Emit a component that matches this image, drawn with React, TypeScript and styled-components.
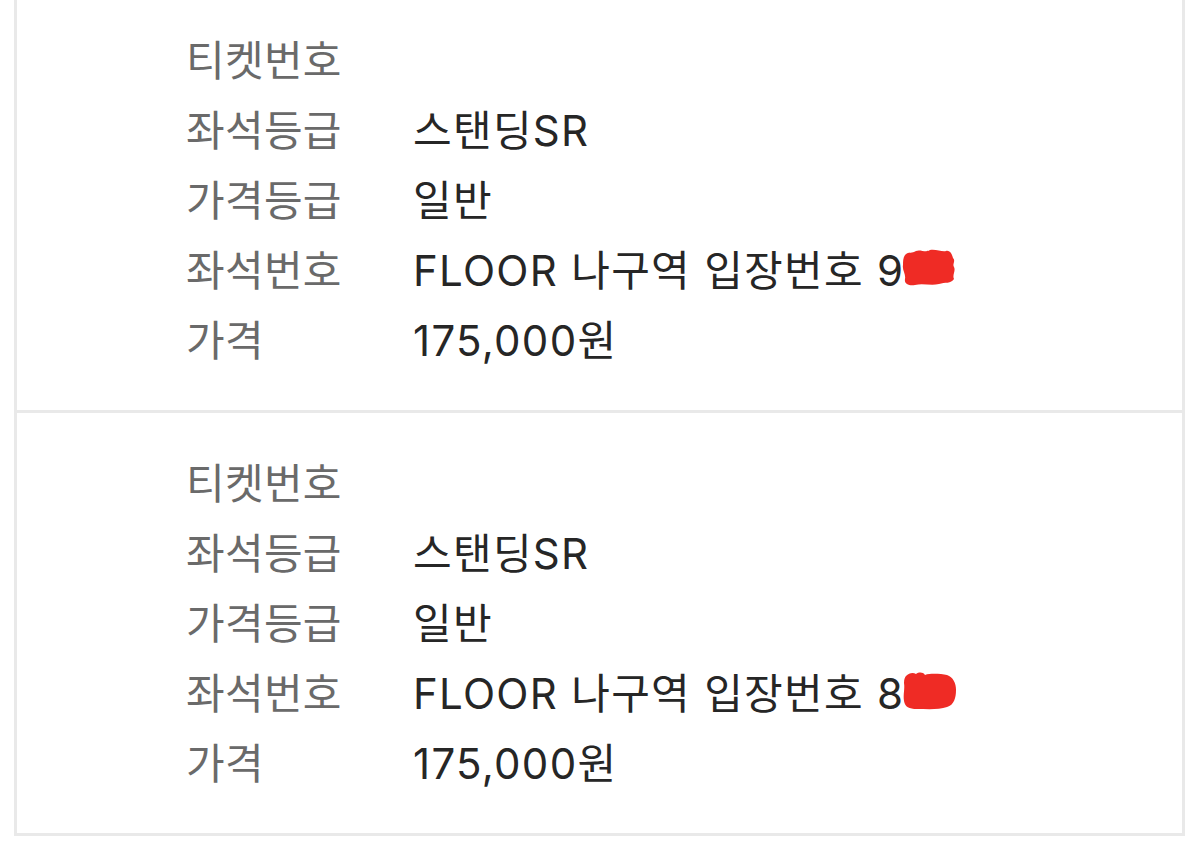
import styled, { createGlobalStyle } from "styled-components";

const GlobalStyle = createGlobalStyle`
    html, body {
        margin: 0;
        padding: 0;
        background: #ffffff;
    }
    body {
        font-family: "Inter", "Noto Sans CJK KR", sans-serif;
        overflow: hidden;
    }
`;

const Page = styled.div`
    width: 1200px;
    height: 847px;
    overflow: hidden;
    background: #ffffff;
`;

const TicketList = styled.div`
    margin: -13px 0 0 14px;
    width: 1171px;
    box-sizing: border-box;
    border: 3px solid #e9e9e9;
`;

const TicketCard = styled.div<{ $last?: boolean }>`
    display: flex;
    flex-direction: column;
    padding: 32px 0 38px 169px;
    border-bottom: ${(props) => (props.$last ? "none" : "3px solid #e9e9e9")};
`;

const Row = styled.div`
    display: grid;
    grid-template-columns: 227px 1fr;
    align-items: center;
    height: 70px;
    font-size: 42px;
`;

const Label = styled.span`
    color: #6a6a6a;
    letter-spacing: 0.3px;
`;

const Value = styled.span`
    color: #262626;
    display: flex;
    align-items: center;
    white-space: nowrap;
    letter-spacing: 1.3px;
`;

const Scribble = styled.svg`
    display: block;
    flex: 0 0 54px;
    width: 54px;
    height: 38px;
    margin-left: -2px;
    margin-top: 2px;
`;

const Blob = ({ variant }: { variant: number }) => (
    <Scribble viewBox="0 0 54 38" preserveAspectRatio="none">
        {variant === 0 ? (
            <path
                d="M3 6 C7 2 10 5 14 2 C18 0 24 4 28 1 C34 0 40 3 44 2 C48 1 50 5 51 9 C54 12 50 15 52 18 C54 22 50 26 52 30 C49 35 43 33 37 35 C29 37 21 34 13 36 C7 37 2 35 3 30 C4 25 0 21 1 16 C1 12 1 9 3 6 Z"
                fill="#ef2b25"
            />
        ) : (
            <path
                d="M4 4 C7 1 11 0 14 2 C17 0 21 0 23 3 C29 1 39 2 45 3 C51 5 54 11 54 18 C54 26 52 33 45 35 C37 38 25 37 15 37 C7 37 3 35 2 29 C1 22 3 17 2 11 C2 7 3 5 4 4 Z"
                fill="#ef2b25"
            />
        )}
    </Scribble>
);

interface Ticket {
    grade: string;
    price: string;
    seatPrefix: string;
    amount: string;
}

const tickets: Ticket[] = [
    { grade: "스탠딩SR", price: "일반", seatPrefix: "FLOOR 나구역 입장번호 9", amount: "175,000원" },
    { grade: "스탠딩SR", price: "일반", seatPrefix: "FLOOR 나구역 입장번호 8", amount: "175,000원" },
];

export default function App() {
    return (
        <Page>
            <GlobalStyle />
            <TicketList>
                {tickets.map((t, i) => (
                    <TicketCard key={i} $last={i === tickets.length - 1}>
                        <Row>
                            <Label>티켓번호</Label>
                            <Value />
                        </Row>
                        <Row>
                            <Label>좌석등급</Label>
                            <Value>{t.grade}</Value>
                        </Row>
                        <Row>
                            <Label>가격등급</Label>
                            <Value>{t.price}</Value>
                        </Row>
                        <Row>
                            <Label>좌석번호</Label>
                            <Value>
                                {t.seatPrefix}
                                <Blob variant={i} />
                            </Value>
                        </Row>
                        <Row>
                            <Label>가격</Label>
                            <Value>{t.amount}</Value>
                        </Row>
                    </TicketCard>
                ))}
            </TicketList>
        </Page>
    );
}
